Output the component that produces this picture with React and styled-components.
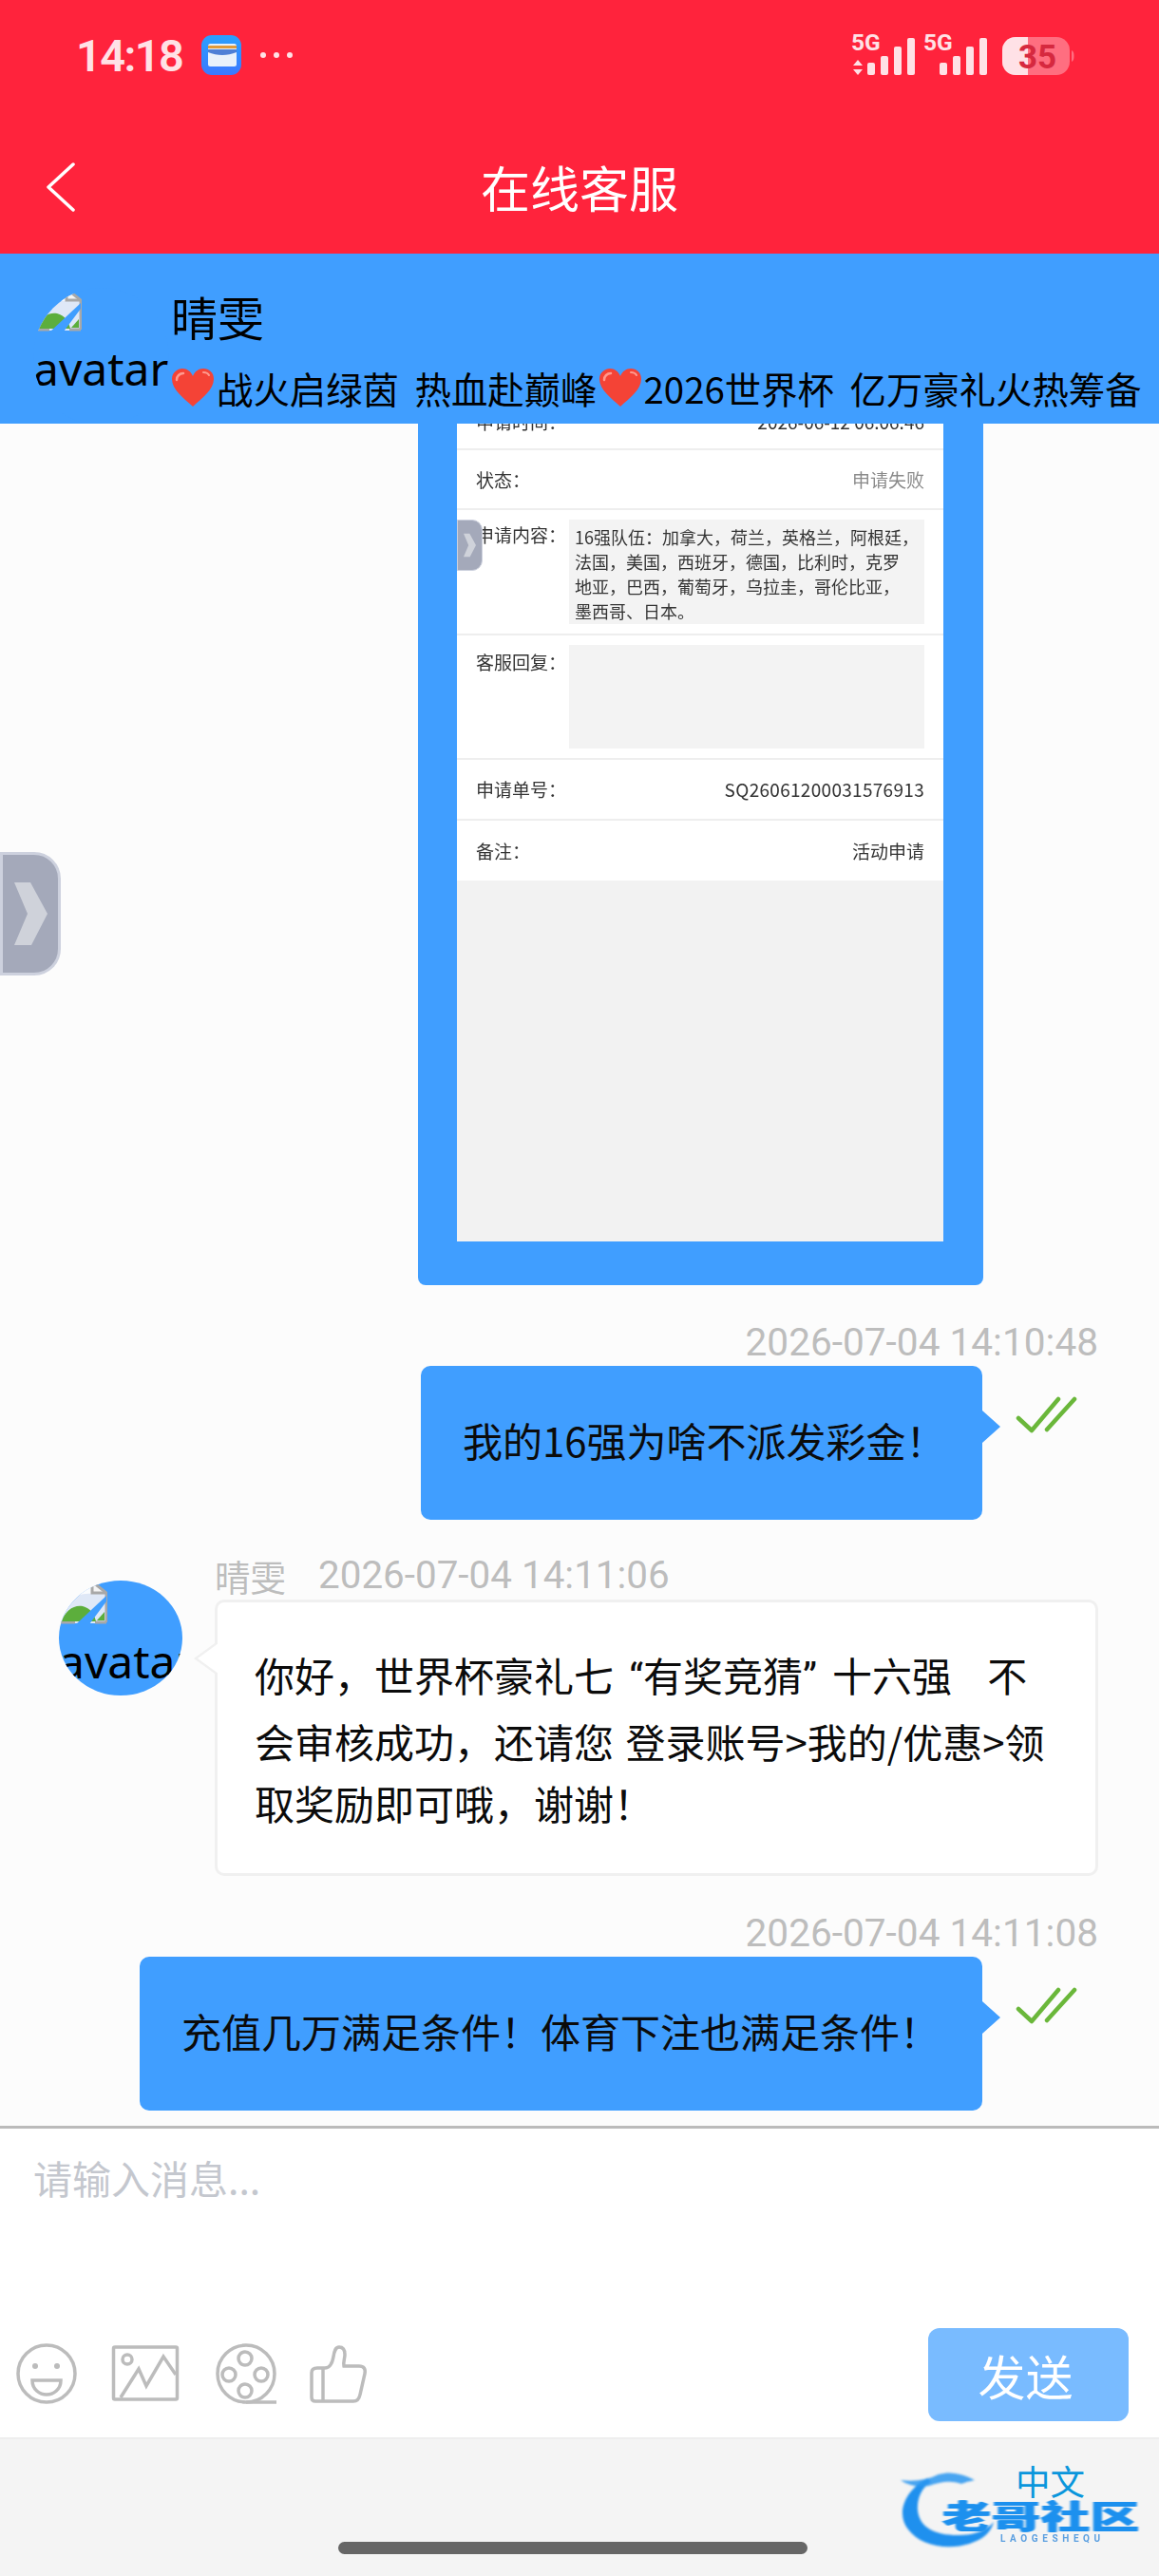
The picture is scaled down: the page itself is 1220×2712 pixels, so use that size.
import React from "react";
import styled, { createGlobalStyle } from "styled-components";

const CJK = `"Noto Sans CJK SC", "Noto Sans", sans-serif`;
const BLUE = "#409eff";

const Global = createGlobalStyle`
  html, body { margin: 0; padding: 0; background: #fcfcfc; }
  #root { width: 1220px; height: 2712px; overflow: hidden; }
  * { box-sizing: border-box; }
`;

const Page = styled.div`
  width: 1220px; height: 2712px; display: flex; flex-direction: column;
  font-family: ${CJK}; background: #fcfcfc; overflow: hidden;
`;

/* top red area */
const RedHeader = styled.header`
  height: 267px; background: #ff233c; flex: none; display: flex; flex-direction: column;
`;
const StatusBar = styled.div`
  height: 116px; padding: 0 85px 0 80px; display: flex; align-items: center; justify-content: space-between;
`;
const StatusLeft = styled.div`
  display: flex; align-items: center;
`;
const Clock = styled.span`
  font: 600 47px/1 Roboto, sans-serif; letter-spacing: -1.6px; color: #ffe1e6; width: 132px;
`;
const Dots = styled.div`
  display: flex; gap: 8px; margin-left: 20px;
`;
const Dot = styled.i`
  width: 6px; height: 6px; border-radius: 50%; background: #ffe1e6; display: block;
`;
const NavBar = styled.div`
  flex: 1; padding: 11px 0 0 49px; display: grid; grid-template-columns: 1fr auto 1fr; align-items: center;
`;
const NavTitle = styled.h1`
  margin: 0 0 0 -49px; font: 400 52px/1.2 ${CJK}; color: #fff;
`;

/* blue contact band */
const ContactBar = styled.section`
  height: 179px; flex: none; background: ${BLUE}; display: flex; padding: 36px 0 0 35px; overflow: hidden;
`;
const Avatar = styled.div`
  flex: none; width: ${p => p.$w}px; height: ${p => p.$h}px; border-radius: 50%; overflow: hidden;
  background: ${BLUE}; display: flex; flex-direction: column;
`;
const AltText = styled.span`
  font: 400 48px/70px "Noto Sans", sans-serif; color: #000; white-space: nowrap; margin-top: 4px;
`;
const BrokenSvg = styled.svg`
  flex: none; display: block;
`;
const ContactInfo = styled.div`
  margin-left: 1px; display: flex; flex-direction: column; min-width: 0;
`;
const ContactName = styled.div`
  font: 400 49px/60px ${CJK}; color: #000; padding-left: 1px;
`;
const Notice = styled.div`
  margin-top: 20px; font: 400 38.4px/50px ${CJK}; color: #000; white-space: pre; display: flex; align-items: center;
  word-spacing: 8px;
`;
const HeartIcon = styled.svg`
  width: 49px; height: 40px; flex: none;
`;

/* chat */
const Chat = styled.main`
  position: relative; height: 1792px; flex: none; overflow: hidden; padding-right: 64px;
  display: flex; flex-direction: column; background: #fcfcfc;
`;
const ImageCard = styled.div`
  position: relative; align-self: flex-end; margin-right: 121px; width: 595px; height: 907px; flex: none;
  padding: 0 42px 46px 41px; background: ${BLUE}; border-radius: 0 0 8px 8px; overflow: hidden;
`;
const Shot = styled.div`
  height: 100%; background: #f2f2f2; display: flex; flex-direction: column; color: #333; font-size: 19px; line-height: 26px;
  filter: blur(0.3px);
`;
const ShotRow = styled.div`
  background: #fff; padding: ${p => p.$pad || "0"} 20px; height: ${p => p.$h}px; flex: none;
  display: flex; justify-content: space-between; align-items: ${p => p.$align || "center"};
  border-bottom: ${p => p.$last ? "0" : "2px solid #eeeeee"}; overflow: hidden;
`;
const ClippedRow = styled(ShotRow)`
  padding: 0 20px 15px; align-items: flex-end;
`;
const ShotValue = styled.span`
  color: ${p => p.$muted ? "#8a8a8a" : "#333"}; letter-spacing: ${p => p.$ls || 0}px; white-space: nowrap;
`;
const ShotLabel = styled.span`
  width: 98px; flex: none; white-space: nowrap; padding-top: ${p => p.$top || 0}px;
`;
const ShotBox = styled.div`
  background: #f3f3f3; width: 375px; height: ${p => p.$h}px; padding: 5px 6px 0; white-space: nowrap;
  font-size: 18px;
`;
const Handle = styled.div`
  position: absolute; left: ${p => p.$left}px; top: ${p => p.$top}px; width: ${p => p.$w}px; height: ${p => p.$h}px;
  background: #a4a9ba; border: ${p => p.$b}px solid #cdd1de; border-radius: 0 ${p => p.$r}px ${p => p.$r}px 0;
  display: flex; align-items: center; justify-content: center; overflow: hidden;
`;

const OutMessage = styled.div`
  margin-top: ${p => p.$top}px; flex: none; display: flex; flex-direction: column; align-items: flex-end;
`;
const Stamp = styled.div`
  font: 400 40.6px/50px Roboto, sans-serif; color: #bdbdbd; white-space: nowrap; height: 50px;
`;
const OutRow = styled.div`
  display: flex; align-items: flex-start; padding-right: 21px;
`;
const OutBubble = styled.div`
  position: relative; background: ${BLUE}; border-radius: 10px; height: 162px; width: ${p => p.$w}px; padding: 0 0 6px 44px;
  display: flex; align-items: center; font-size: 42px; line-height: 65.6px; color: #0b0b0b; white-space: nowrap;
  &::after {
    content: ""; position: absolute; left: 100%; top: 47px; border-style: solid;
    border-width: 17.5px 0 17.5px 19px; border-color: transparent transparent transparent ${BLUE};
  }
`;
const Tick = styled.svg`
  width: 66px; height: 40px; margin: 32px 0 0 35px; flex: none;
`;

const InMessage = styled.div`
  margin-top: 34px; margin-left: 62px; flex: none; display: flex; gap: 34px;
`;
const InAvatarSlot = styled.div`
  padding-top: 30px; flex: none;
`;
const InBody = styled.div`
  display: flex; flex-direction: column; width: 930px;
`;
const InMeta = styled.div`
  height: 50px; display: flex; gap: 34px; font: 400 40.4px/50px Roboto, sans-serif; color: #bdbdbd;
`;
const SenderName = styled.span`
  font: 400 37.5px/50px ${CJK};
`;
const InBubble = styled.div`
  position: relative; background: #fff; border: 3px solid #f0f0f0; border-radius: 10px; height: 291px;
  padding: 43px 0 0 39px; font-size: 42px; line-height: 65.6px; color: #0b0b0b; white-space: nowrap; word-spacing: 3px;
  &::before, &::after { content: ""; position: absolute; top: 43px; border-style: solid; border-color: transparent; }
  &::before { left: -25px; border-width: 16px 22px 16px 0; border-right-color: #f0f0f0; }
  &::after { left: -21px; border-width: 16px 22px 16px 0; border-right-color: #fff; }
`;
const Quote = styled.span`
  display: inline-block; width: 31px; text-align: ${p => p.$side};
  font-family: Roboto, sans-serif;
`;

/* composer */
const Composer = styled.section`
  height: 328px; flex: none; background: #fff; border-top: 3px solid #bbbbbb; display: flex; flex-direction: column;
  justify-content: space-between;
`;
const Placeholder = styled.div`
  padding: 21px 0 0 35px; font-size: 41px; line-height: 60px; color: #c4c7ce;
`;
const ComposerBar = styled.div`
  display: flex; align-items: flex-end; justify-content: space-between; padding: 0 32px 17px 17px;
`;
const ToolIcons = styled.div`
  display: flex; gap: 37px; align-items: center; padding-bottom: 17px;
`;
const ToolIcon = styled.svg`
  height: 66px; width: ${p => p.$w}px; overflow: visible; flex: none; fill: none; stroke: #bcbcbc; stroke-width: 3.5;
`;
const SendButton = styled.button`
  width: 211px; height: 98px; border: 0; border-radius: 12px; background: #79bbff; color: #fff;
  font: 400 50px/1 ${CJK}; padding: 0 6px 0 0;
`;

/* bottom */
const Footer = styled.footer`
  position: relative; flex: 1; background: #f4f4f4; border-top: 2px solid #eeeeee;
  display: flex; align-items: flex-end; justify-content: center; padding: 0 14px 23px 0;
`;
const HomeBar = styled.div`
  width: 494px; height: 13px; border-radius: 7px; background: #666;
`;
const Logo = styled.div`
  position: absolute; left: 948px; top: 27px; width: 256px; height: 100px;
`;
const LogoArc = styled.svg`
  position: absolute; left: 0; top: 0; width: 110px; height: 100px; filter: blur(0.8px);
`;
const LogoName = styled.span`
  position: absolute; left: 44px; top: 22px; width: 210px; font: 900 51px/60px ${CJK}; color: #1c90ee; white-space: nowrap;
  letter-spacing: 1px; transform: scaleY(0.66); transform-origin: center; filter: blur(0.9px);
  text-shadow: 1px 0 0 #1c90ee, -1px 0 0 #1c90ee;
`;
const LogoSub = styled.span`
  position: absolute; left: 105px; top: 72px; font: 700 10px/12px Roboto, sans-serif; letter-spacing: 4.6px; color: #5b9fe0; filter: blur(0.4px);
`;
const LangLink = styled.span`
  position: absolute; left: 121px; top: -6px; font: 400 36.5px/46px ${CJK}; color: #0a96dc;
`;

const StatusIcons = () => (
  <svg width="245" height="55" viewBox="895 30 245 55">
    <g fill="#ffe1e6">
      <text x="901" y="52" fontFamily="Roboto, sans-serif" fontWeight="700" fontSize="24.500">5G</text>
      <text x="977" y="52" fontFamily="Roboto, sans-serif" fontWeight="700" fontSize="24.500">5G</text>
      <path d="M908 62l5 6h-10zM908 78l5-6h-10z" />
      <rect x="918" y="65" width="8" height="13" rx="2" />
      <rect x="932" y="58" width="8" height="20" rx="2" />
      <rect x="946" y="48" width="8" height="30" rx="2" />
      <rect x="960" y="39" width="8" height="39" rx="2" />
      <rect x="994" y="65" width="8" height="13" rx="2" />
      <rect x="1008" y="58" width="8" height="20" rx="2" />
      <rect x="1022" y="48" width="8" height="30" rx="2" />
      <rect x="1036" y="39" width="8" height="39" rx="2" />
    </g>
    <rect x="1060" y="38" width="71" height="40" rx="14" fill="#ff6e80" />
    <path d="M1133 52c2 1 2.500 3 2.500 6s-.5 5-2.500 6z" fill="#ff6e80" />
    <path d="M1087 38h-13a14 14 0 0 0-14 14v12a14 14 0 0 0 14 14h13z" fill="#ffe1e6" />
    <text x="1077" y="71" fontFamily="Roboto, sans-serif" fontWeight="700" fontSize="35" fill="#d6293f">35</text>
  </svg>
);

const WalletIcon = () => (
  <svg width="42" height="42" viewBox="0 0 42 42">
    <defs>
      <linearGradient id="wal" x1="0" y1="0" x2="0" y2="1">
        <stop offset="0" stopColor="#2aa0ff" />
        <stop offset="1" stopColor="#3b78ff" />
      </linearGradient>
    </defs>
    <rect width="42" height="42" rx="11" fill="url(#wal)" />
    <rect x="7" y="9" width="30" height="24" rx="2.500" fill="#e8f1fb" />
    <rect x="7" y="11" width="30" height="3" fill="#e09a3c" />
    <path d="M7 15h30v3c-5 2-10 3-15 3s-10-1-15-3z" fill="#4d7fd6" />
  </svg>
);

const BrokenImage = () => (
  <BrokenSvg width="51" height="46" viewBox="0 0 51 46">
    <path d="M1 1h34l15 12v32H1z" fill="#dfe8f7" />
    <path d="M4 4h30v10c-9-1-22 3-30 14z" fill="#fff" opacity=".85" />
    <path d="M35 1v12h15" fill="#f4f4f4" stroke="#a8a8a8" strokeWidth="3" />
    <path d="M1 44V1h34l15 12v31" fill="none" stroke="#a8a8a8" strokeWidth="3" />
    <path d="M1 44h16M38 44h12" fill="none" stroke="#a8a8a8" strokeWidth="3" />
    <path d="M3 43c3-11 13-18 22-16 8 2 12 8 14 16z" fill="#5cae3c" />
    <path d="M32 46L50 22v-6L18 46z" fill="#409eff" />
    <path d="M40 42l8-9v9z" fill="#5cae3c" />
  </BrokenSvg>
);

const Chevron = ({ w, h }) => (
  <svg width={w} height={h} viewBox="0 0 35 66">
    <path d="M0 0h17l18 33-17 33H0l14-33z" fill="#cfd2da" />
  </svg>
);

const Heart = () => (
  <HeartIcon viewBox="0 0 49 40">
    <path d="M24 40C14 31 2 22 2 11 2 4 8 0 13 0c5 0 9 3 11 8 2-5 6-8 11-8 6 0 11 4 11 11 0 11-12 20-22 29z" fill="#f44336" />
    <path d="M7 12c0-4 3-7 7-7" stroke="#ff9a8e" strokeWidth="2.500" fill="none" strokeLinecap="round" />
    <path d="M35 4c3 0 5 1 6 3" stroke="#ff9a8e" strokeWidth="2" fill="none" strokeLinecap="round" />
  </HeartIcon>
);

const DoubleTick = () => (
  <Tick viewBox="1070 1470 66 40" fill="none" stroke="#6ab73a" strokeWidth="4.500" strokeLinecap="round" strokeLinejoin="round">
    <path d="M1073 1493l14 13 28-33" />
    <path d="M1103 1505l29-32" />
  </Tick>
);

const Row = ({ label, labelTop, children, ...rest }) => (
  <ShotRow {...rest}>
    <ShotLabel $top={labelTop}>{label}{"\uff1a"}</ShotLabel>
    {children}
  </ShotRow>
);

export default function App() {
  return (
    <Page>
      <Global />
      <RedHeader>
        <StatusBar>
          <StatusLeft>
            <Clock>14:18</Clock>
            <WalletIcon />
            <Dots><Dot /><Dot /><Dot /></Dots>
          </StatusLeft>
          <StatusIcons />
        </StatusBar>
        <NavBar>
          <svg width="30" height="52" viewBox="0 0 30 52" fill="none" stroke="#fff" strokeWidth="3.500" strokeLinecap="round" strokeLinejoin="round">
            <path d="M28 2L2 26l26 24" />
          </svg>
          <NavTitle>在线客服</NavTitle>
          <span />
        </NavBar>
      </RedHeader>

      <ContactBar>
        <Avatar $w={143} $h={145}>
          <BrokenImage />
          <AltText>avatar</AltText>
        </Avatar>
        <ContactInfo>
          <ContactName>晴雯</ContactName>
          <Notice><Heart />战火启绿茵 热血赴巅峰<Heart />2026世界杯 亿万豪礼火热筹备</Notice>
        </ContactInfo>
      </ContactBar>

      <Chat>
        <ImageCard>
          <Shot>
            <ClippedRow $h={28}>
              <ShotLabel>{"申请时间\uff1a"}</ShotLabel>
              <ShotValue>2026-06-12 06:06:46</ShotValue>
            </ClippedRow>
            <Row $h={63} label="状态"><ShotValue $muted>申请失败</ShotValue></Row>
            <Row $h={132} $align="flex-start" $pad="10px" labelTop={3} label="申请内容">
              <ShotBox $h={110}>
                {"16强队伍\uff1a加拿大\uff0c荷兰\uff0c英格兰\uff0c阿根廷\uff0c"}<br />
                {"法国\uff0c美国\uff0c西班牙\uff0c德国\uff0c比利时\uff0c克罗"}<br />
                {"地亚\uff0c巴西\uff0c葡萄牙\uff0c乌拉圭\uff0c哥伦比亚\uff0c"}<br />
                {"墨西哥\u3001日本\u3002"}
              </ShotBox>
            </Row>
            <Row $h={131} $align="flex-start" $pad="10px" labelTop={5} label="客服回复"><ShotBox $h={109} /></Row>
            <Row $h={64} label="申请单号"><ShotValue $ls={0.3}>SQ26061200031576913</ShotValue></Row>
            <Row $h={63} $last label="备注"><ShotValue>活动申请</ShotValue></Row>
          </Shot>
          <Handle $left={41} $top={101} $w={27} $h={54} $b={1} $r={11}><Chevron w={13} h={26} /></Handle>
        </ImageCard>

        <OutMessage $top={35}>
          <Stamp>2026-07-04 14:10:48</Stamp>
          <OutRow>
            <OutBubble $w={591}>{"我的16强为啥不派发彩金\uff01"}</OutBubble>
            <DoubleTick />
          </OutRow>
        </OutMessage>

        <InMessage>
          <InAvatarSlot>
            <Avatar $w={130} $h={121}>
              <BrokenImage />
              <AltText>avatar</AltText>
            </Avatar>
          </InAvatarSlot>
          <InBody>
            <InMeta><SenderName>晴雯</SenderName><span>2026-07-04 14:11:06</span></InMeta>
            <InBubble>
              {"你好\uff0c世界杯豪礼七"}<Quote $side="right">{"\u201c"}</Quote>有奖竞猜<Quote $side="left">{"\u201d"}</Quote>十六强{"\u00a0\u00a0\u00a0"}不<br />
              {"会审核成功\uff0c还请您 登录账号>我的/优惠>领"}<br />
              {"取奖励即可哦\uff0c谢谢\uff01"}
            </InBubble>
          </InBody>
        </InMessage>

        <OutMessage $top={35}>
          <Stamp>2026-07-04 14:11:08</Stamp>
          <OutRow>
            <OutBubble $w={887}>{"充值几万满足条件\uff01体育下注也满足条件\uff01"}</OutBubble>
            <DoubleTick />
          </OutRow>
        </OutMessage>

        <Handle $left={0} $top={451} $w={64} $h={130} $b={3} $r={28}><Chevron w={35} h={66} /></Handle>
      </Chat>

      <Composer>
        <Placeholder>请输入消息...</Placeholder>
        <ComposerBar>
          <ToolIcons>
            <ToolIcon $w={64} viewBox="0 0 64 66">
              <circle cx="32" cy="33" r="30" />
              <circle cx="20" cy="25" r="3" fill="#bcbcbc" stroke="none" />
              <circle cx="43" cy="25" r="3" fill="#bcbcbc" stroke="none" />
              <path d="M17 40h30c0 10-8 15-15 15s-15-5-15-15z" />
            </ToolIcon>
            <ToolIcon $w={72} viewBox="0 0 72 66">
              <rect x="1.500" y="5" width="67" height="55" rx="1.500" />
              <circle cx="16" cy="18" r="5" />
              <path d="M9 58l19-30 8 18 18-31 13 19" />
            </ToolIcon>
            <ToolIcon $w={62} viewBox="0 0 62 66">
              <circle cx="32" cy="33" r="30" />
              <circle cx="31" cy="17" r="7" />
              <circle cx="14" cy="34" r="7" />
              <circle cx="48" cy="34" r="7" />
              <circle cx="31" cy="51" r="7" />
              <path d="M32 63h32" />
            </ToolIcon>
            <ToolIcon $w={60} viewBox="0 0 60 66">
              <path d="M8 27h8c6 0 8-6 9-12 1-6 2-10 6-10 5 0 6 4 6 8 0 4-2 8-1 12h16c5 0 7 3 6 8l-5 22c-1 5-3 7-7 7H6c-3 0-4-2-4-4V32c0-3 2-5 6-5z" />
              <path d="M14 27v35" />
            </ToolIcon>
          </ToolIcons>
          <SendButton>发送</SendButton>
        </ComposerBar>
      </Composer>

      <Footer>
        <HomeBar />
        <Logo>
          <LogoArc viewBox="0 0 110 100">
            <path d="M28 14C6 26-6 50 8 68c13 18 46 24 72 12 10-4 16-12 18-20-8 10-22 14-38 14C36 74 20 66 18 48 17 36 22 24 32 18z" fill="#1f90ee" />
            <path d="M0 16c14 2 28 0 40-6 14-4 26 0 38 6-6 2-10 2-14 4-12-4-22-2-34 2C20 24 8 22 0 16z" fill="#2a97f0" opacity=".85" />
          </LogoArc>
          <LogoName>老哥社区</LogoName>
          <LogoSub>LAOGESHEQU</LogoSub>
          <LangLink>中文</LangLink>
        </Logo>
      </Footer>
    </Page>
  );
}
